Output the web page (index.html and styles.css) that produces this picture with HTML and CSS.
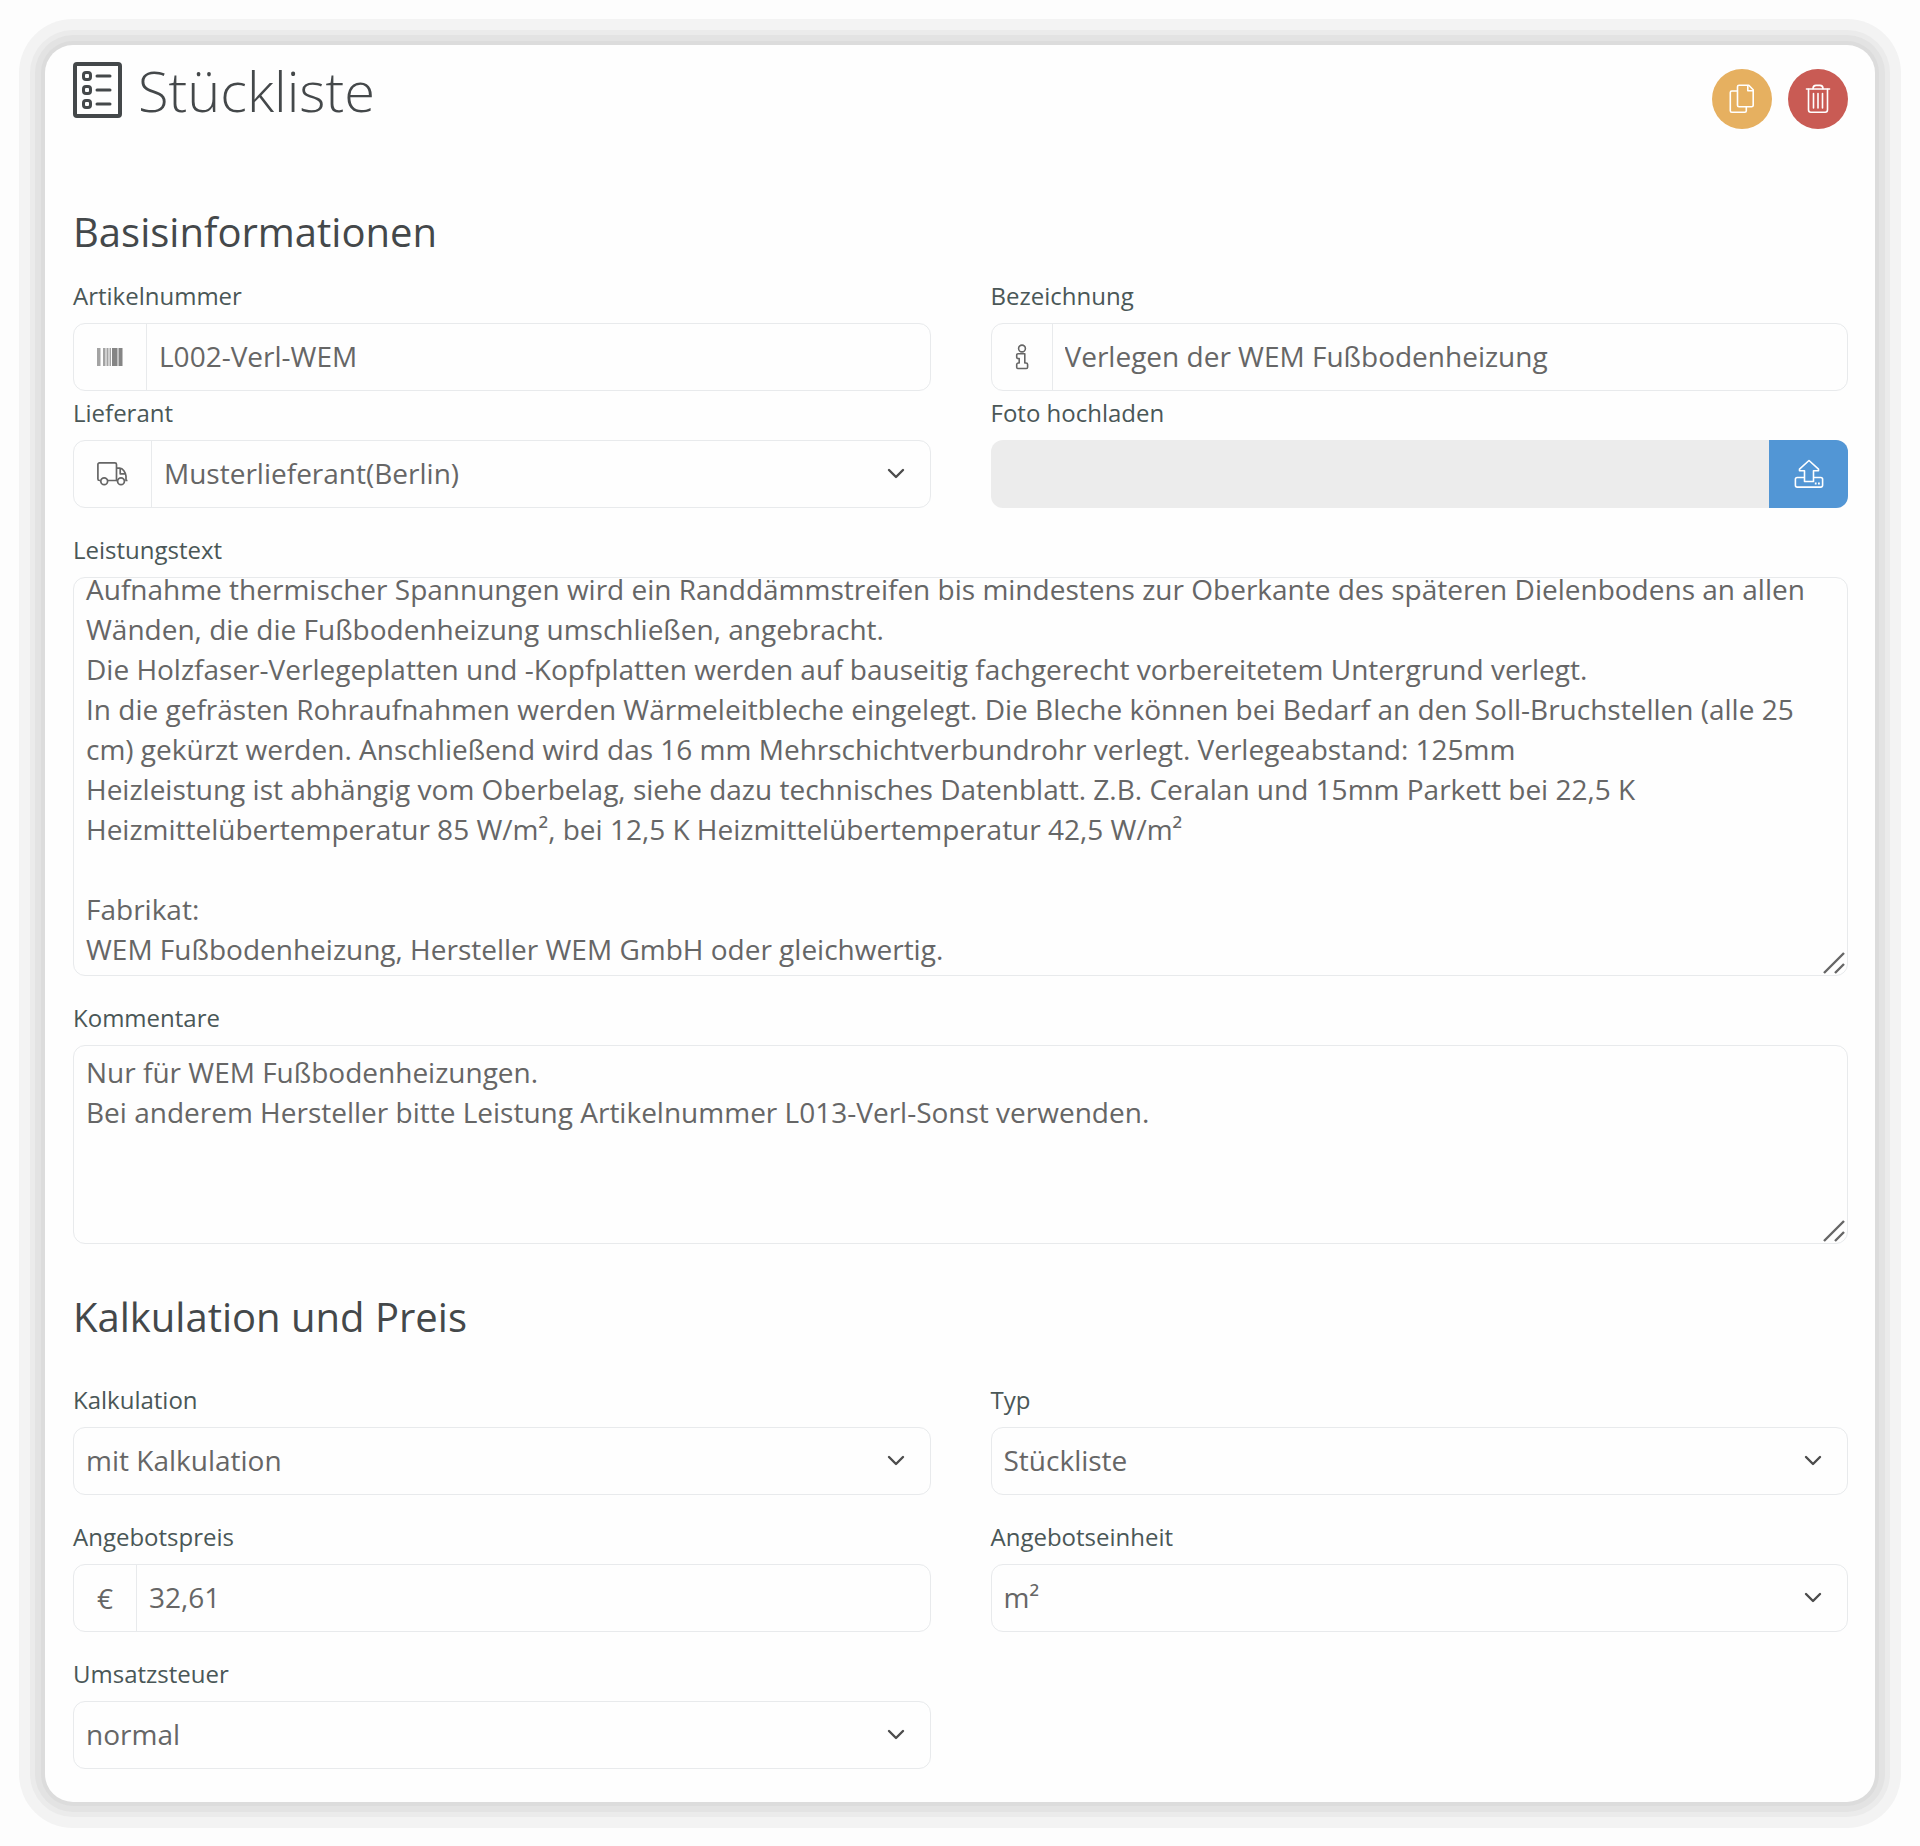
FILE: index.html
```html
<!DOCTYPE html>
<html lang="de">
<head>
    <meta charset="UTF-8">
    <meta name="viewport" content="width=device-width, initial-scale=1.0">
    <title>Stückliste</title>
    <link rel="stylesheet" href="styles.css">
</head>
<body>
    <main class="card">
        <header class="card-header">
            <h1>
                <svg class="title-icon" width="49" height="56" viewBox="0 0 49 56" fill="none" stroke="currentColor" stroke-width="4" stroke-linecap="round">
                    <rect x="2" y="2" width="45" height="52" rx="2"/>
                    <rect x="10.5" y="10.5" width="7" height="7" rx="2.5" stroke-width="3"/>
                    <rect x="10.5" y="24.5" width="7" height="7" rx="2.5" stroke-width="3"/>
                    <rect x="10.5" y="38.5" width="7" height="7" rx="2.5" stroke-width="3"/>
                    <path d="M24 14h13M24 28h13M24 42h13" stroke-width="3"/>
                </svg>
                Stückliste
            </h1>
            <div class="actions">
                <button type="button" class="btn-round btn-copy" aria-label="Kopieren">
                    <svg width="26" height="30" viewBox="0 0 26 30" fill="none" stroke="currentColor" stroke-width="1.6" stroke-linejoin="round">
                        <path d="M10 1.2h9.8l4.4 4.6v15.4a1.5 1.5 0 0 1-1.5 1.5H10a1.5 1.5 0 0 1-1.5-1.5V2.7A1.5 1.5 0 0 1 10 1.2z"/>
                        <path d="M18.8 1.5v5.2h5.2"/>
                        <path d="M8.3 7H2.8a1.5 1.5 0 0 0-1.5 1.5v18.3a1.5 1.5 0 0 0 1.5 1.5h13a1.5 1.5 0 0 0 1.5-1.5v-4"/>
                    </svg>
                </button>
                <button type="button" class="btn-round btn-delete" aria-label="Löschen">
                    <svg width="26" height="30" viewBox="0 0 26 30" fill="none" stroke="currentColor" stroke-width="1.6" stroke-linecap="round">
                        <path d="M1.5 5h23"/>
                        <path d="M8 4.8c0-2.2 1-3.4 3-3.4h4c2 0 3 1.2 3 3.4"/>
                        <path d="M3.5 5.2v20.5c0 1.6.8 2.5 2.3 2.5h14.4c1.5 0 2.3-.9 2.3-2.5V5.2"/>
                        <path d="M8.5 9.5v14.5M13 9.5v14.5M17.5 9.5v14.5"/>
                    </svg>
                </button>
            </div>
        </header>

        <form>
            <h2>Basisinformationen</h2>
            <div class="row row-tight">
                <div class="field">
                    <label for="artikelnummer">Artikelnummer</label>
                    <div class="control">
                        <span class="addon">
                            <svg width="26" height="18" viewBox="0 0 26 18" fill="currentColor">
                                <path opacity=".6" d="M0 0h3.5v18H0zM6 0h2.5v18H6zM9.5 0h2v18h-2zM12.5 0h1.5v18h-1.5z"/>
                                <path opacity=".8" d="M15 0h5.5v18H15zM21.5 0h4v18h-4z"/>
                            </svg>
                        </span>
                        <input type="text" id="artikelnummer" value="L002-Verl-WEM">
                    </div>
                </div>
                <div class="field">
                    <label for="bezeichnung">Bezeichnung</label>
                    <div class="control">
                        <span class="addon">
                            <svg width="14" height="26" viewBox="0 0 14 26" fill="none" stroke="currentColor" stroke-width="1.6" stroke-linejoin="round">
                                <circle cx="7" cy="4.5" r="3.4"/>
                                <path d="M3 9.8h6.800v9.2h1.2a1.6 1.6 0 0 1 1.6 1.6v2.6a1.3 1.3 0 0 1-1.3 1.3H3a1.3 1.3 0 0 1-1.3-1.3v-2.6A1.6 1.6 0 0 1 3.300 19h.9v-4.5H3a1.3 1.3 0 0 1-1.3-1.3v-2.1A1.3 1.3 0 0 1 3 9.800z"/>
                            </svg>
                        </span>
                        <input type="text" id="bezeichnung" value="Verlegen der WEM Fußbodenheizung">
                    </div>
                </div>
                <div class="field">
                    <label for="lieferant">Lieferant</label>
                    <div class="control">
                        <span class="addon">
                            <svg width="31" height="24" viewBox="0 0 31 24" fill="none" stroke="currentColor" stroke-width="1.7" stroke-linejoin="round">
                                <path d="M3.5 18.5H2.5a1.6 1.6 0 0 1-1.6-1.6V2.5A1.6 1.6 0 0 1 2.5.9h15.400a1.6 1.6 0 0 1 1.6 1.6v16h-8.5"/>
                                <path d="M19.5 6.2h3.2c3.2 0 5.8 4.3 6.3 8v4.3h1.5M28.300 11.800h-5.100V6.5M19.5 18.5h1"/>
                                <circle cx="7.2" cy="19.3" r="3.4"/>
                                <circle cx="24" cy="19.3" r="3.4"/>
                            </svg>
                        </span>
                        <select id="lieferant">
                            <option>Musterlieferant(Berlin)</option>
                        </select>
                        <svg class="chevron" width="18" height="12" viewBox="0 0 18 12"><path d="M2 2l7 7 7-7"/></svg>
                    </div>
                </div>
                <div class="field">
                    <label for="foto">Foto hochladen</label>
                    <div class="control control-upload">
                        <input type="text" id="foto" readonly>
                        <button type="button" class="btn-upload" aria-label="Foto hochladen">
                            <svg width="30" height="30" viewBox="0 0 30 30" fill="none" stroke="currentColor" stroke-width="1.6" stroke-linejoin="round">
                                <path d="M10.5 18.5H3.2A1.8 1.8 0 0 0 1.4 20.3v6a1.8 1.8 0 0 0 1.8 1.8h23.6a1.8 1.8 0 0 0 1.8-1.8v-6a1.8 1.8 0 0 0-1.8-1.8h-7.3"/>
                                <path d="M15 1.5L5.5 10.2v1.6h5v10.7h9V11.8h5v-1.6z"/>
                                <path d="M20.8 24.5h1.8M24 24.5h1.8" stroke-width="2"/>
                            </svg>
                        </button>
                    </div>
                </div>
            </div>

            <div class="field">
                <label for="leistungstext">Leistungstext</label>
                <div class="textarea-wrap">
                    <textarea id="leistungstext" class="textarea-large">
Lieferung und Verlegung der WEM Fußbodenheizung.
Aufnahme thermischer Spannungen wird ein Randdämmstreifen bis mindestens zur Oberkante des späteren Dielenbodens an allen Wänden, die die Fußbodenheizung umschließen, angebracht.
Die Holzfaser-Verlegeplatten und -Kopfplatten werden auf bauseitig fachgerecht vorbereitetem Untergrund verlegt.
In die gefrästen Rohraufnahmen werden Wärmeleitbleche eingelegt. Die Bleche können bei Bedarf an den Soll-Bruchstellen (alle 25 cm) gekürzt werden. Anschließend wird das 16 mm Mehrschichtverbundrohr verlegt. Verlegeabstand: 125mm
Heizleistung ist abhängig vom Oberbelag, siehe dazu technisches Datenblatt. Z.B. Ceralan und 15mm Parkett bei 22,5 K Heizmittelübertemperatur 85 W/m², bei 12,5 K Heizmittelübertemperatur 42,5 W/m²

Fabrikat:
WEM Fußbodenheizung, Hersteller WEM GmbH oder gleichwertig.</textarea>
                    <svg class="grip" width="22" height="22" viewBox="0 0 22 22"><path d="M1 21L21 1M12 21l9-9"/></svg>
                </div>
            </div>

            <div class="field">
                <label for="kommentare">Kommentare</label>
                <div class="textarea-wrap">
                    <textarea id="kommentare">
Nur für WEM Fußbodenheizungen.
Bei anderem Hersteller bitte Leistung Artikelnummer L013-Verl-Sonst verwenden.</textarea>
                    <svg class="grip" width="22" height="22" viewBox="0 0 22 22"><path d="M1 21L21 1M12 21l9-9"/></svg>
                </div>
            </div>

            <h2 class="section-price">Kalkulation und Preis</h2>
            <div class="row">
                <div class="field">
                    <label for="kalkulation">Kalkulation</label>
                    <div class="control">
                        <select id="kalkulation">
                            <option>mit Kalkulation</option>
                        </select>
                        <svg class="chevron" width="18" height="12" viewBox="0 0 18 12"><path d="M2 2l7 7 7-7"/></svg>
                    </div>
                </div>
                <div class="field">
                    <label for="typ">Typ</label>
                    <div class="control">
                        <select id="typ">
                            <option>Stückliste</option>
                        </select>
                        <svg class="chevron" width="18" height="12" viewBox="0 0 18 12"><path d="M2 2l7 7 7-7"/></svg>
                    </div>
                </div>
                <div class="field">
                    <label for="angebotspreis">Angebotspreis</label>
                    <div class="control">
                        <span class="addon">€</span>
                        <input type="text" id="angebotspreis" value="32,61">
                    </div>
                </div>
                <div class="field">
                    <label for="angebotseinheit">Angebotseinheit</label>
                    <div class="control">
                        <select id="angebotseinheit">
                            <option>m²</option>
                        </select>
                        <svg class="chevron" width="18" height="12" viewBox="0 0 18 12"><path d="M2 2l7 7 7-7"/></svg>
                    </div>
                </div>
                <div class="field">
                    <label for="umsatzsteuer">Umsatzsteuer</label>
                    <div class="control">
                        <select id="umsatzsteuer">
                            <option>normal</option>
                        </select>
                        <svg class="chevron" width="18" height="12" viewBox="0 0 18 12"><path d="M2 2l7 7 7-7"/></svg>
                    </div>
                </div>
            </div>
        </form>
    </main>

    <script>
    // show the end of the long text first
    let leistungstext = document.querySelector("#leistungstext");
    leistungstext.scrollTop = leistungstext.scrollHeight;
    </script>
</body>
</html>
```
FILE: styles.css
```css
* {
    box-sizing: border-box;
}

body {
    margin: 0;
    padding: 45px;
    background-color: #fdfdfd;
    color: #666;
    font-family: "Open Sans", "Noto Sans", sans-serif;
    font-size: 28px;
    line-height: 40px;
}

.card {
    padding: 17px 27px 33px 28px;
    border-radius: 28px;
    background-color: #fefefe;
    box-shadow: 0 0 0 4px #dcdcdc, 0 0 0 10px #e3e3e3, 0 0 0 15px #ebebeb, 0 0 0 26px #f3f3f3;
}

.card-header {
    display: flex;
    justify-content: space-between;
    align-items: flex-start;
    margin-bottom: 76px;
}

h1,
h2 {
    margin: 0;
    color: #44484a;
}

h1 {
    display: flex;
    align-items: center;
    gap: 16px;
    font-size: 56px;
    font-weight: 300;
    line-height: 56px;
}

h2 {
    margin-bottom: 18px;
    font-size: 40px;
    font-weight: 400;
    line-height: 54px;
}

.section-price {
    margin-top: 46px;
    margin-bottom: 37px;
}

.actions {
    display: flex;
    gap: 16px;
    margin-top: 7px;
}

button {
    display: flex;
    align-items: center;
    justify-content: center;
    padding: 0;
    border: 0;
    color: #fff;
    cursor: pointer;
}

.btn-round {
    width: 60px;
    height: 60px;
    border-radius: 50%;
}

.btn-copy {
    background-color: #e6b060;
}

.btn-delete {
    background-color: #c95b54;
}

.row {
    display: grid;
    grid-template-columns: 1fr 1fr;
    gap: 23px 60px;
}

.row-tight {
    row-gap: 3px;
}

.row-tight,
form > .field {
    margin-bottom: 23px;
}

label {
    display: block;
    margin-bottom: 8px;
    color: #4a5757;
    font-size: 24px;
    line-height: 38px;
}

.control {
    position: relative;
    display: flex;
    height: 68px;
    border: 1px solid #e8eaec;
    border-radius: 12px;
    overflow: hidden;
}

.addon {
    display: flex;
    align-items: center;
    padding: 0 23px;
    border-right: 1px solid #e8eaec;
}

input,
select,
textarea {
    padding: 0 12px 2px;
    border: 0;
    outline: 0;
    background: transparent;
    color: inherit;
    font: inherit;
}

input,
select {
    flex: 1;
    min-width: 0;
    appearance: none;
}

.chevron {
    position: absolute;
    top: 27px;
    right: 25px;
    pointer-events: none;
}

.chevron path {
    fill: none;
    stroke: #4c4c4c;
    stroke-width: 2.4;
    stroke-linecap: round;
    stroke-linejoin: round;
}

.control-upload {
    border: 0;
    background-color: #ececec;
}

.btn-upload {
    width: 79px;
    background-color: #5296d5;
}

.textarea-wrap {
    position: relative;
}

textarea {
    display: block;
    width: 100%;
    height: 199px;
    padding: 6px 12px;
    border: 1px solid #e8eaec;
    border-radius: 12px;
    resize: none;
    scrollbar-width: none;
}

.textarea-large {
    height: 399px;
}

.grip {
    position: absolute;
    right: 3px;
    bottom: 2px;
    pointer-events: none;
}

.grip path {
    fill: none;
    stroke: #666;
    stroke-width: 2.4;
}

@media screen and (max-width: 900px) {
    .row {
        grid-template-columns: 1fr;
    }
}
```
